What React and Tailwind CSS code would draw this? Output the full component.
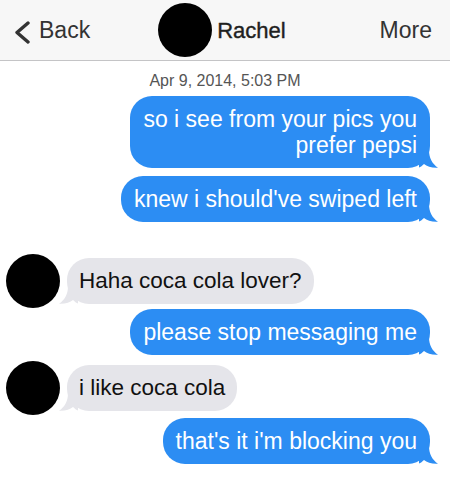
import React from "react";

/* ── DATA ─────────────────────────────────────────────────────────────── */
const BLUE = "#2c8df3";

/* ── TAILS ────────────────────────────────────────────────────────────── */
const TailRight = ({ color }) => (
  <svg
    className="absolute -right-[9px] bottom-0"
    width="20"
    height="18"
    viewBox="0 0 20 18"
  >
    <path
      d="M0 0 H10 C10 8 13 13.5 19 17.8 C13 18.2 8 16.5 5 14 C3.5 15.5 1.5 17 0 17.5 Z"
      fill={color}
    />
  </svg>
);

const TailLeft = ({ color }) => (
  <svg
    className="absolute -left-[9px] bottom-0"
    width="20"
    height="18"
    viewBox="0 0 20 18"
  >
    <path
      d="M20 0 H10 C10 8 7 13.5 1 17.8 C7 18.2 12 16.5 15 14 C16.5 15.5 18.5 17 20 17.5 Z"
      fill={color}
    />
  </svg>
);

/* ── BUBBLES ──────────────────────────────────────────────────────────── */
const Sent = ({ children, className = "" }) => (
  <div
    className={`relative rounded-[22px] bg-[#2c8df3] px-[13px] py-[10px] text-right text-[23px] leading-[26px] text-white ${className}`}
  >
    <span className="relative z-10">{children}</span>
    <TailRight color={BLUE} />
  </div>
);

const Received = ({ children }) => (
  <div className="relative ml-[7px] rounded-[22px] bg-[#e5e5ea] px-[12px] py-[10px] text-[22.5px] leading-[26px] text-[#111]">
    <span className="relative z-10">{children}</span>
    <TailLeft color="#e5e5ea" />
  </div>
);

const Avatar = () => <div className="h-[54px] w-[54px] shrink-0 rounded-full bg-black" />;

/* ══════════════════════════════════════════════════════════════════════
   MAIN PAGE
   ══════════════════════════════════════════════════════════════════════ */
export default function App() {
  return (
    <div
      className="min-h-[500px] w-[450px] overflow-hidden bg-white"
      style={{ fontFamily: '"Liberation Sans", Arial, sans-serif' }}
    >
      {/* ── HEADER ──────────────────────────────────────────────────── */}
      <div className="flex h-[61px] items-center border-b border-[#c4c4c6] bg-[#f7f7f7] pl-[14px] pr-[18px] text-[#333]">
        <svg width="17" height="23" viewBox="0 0 17 23" className="mt-[4px]">
          <polyline
            points="14,2 3,11.5 14,21"
            fill="none"
            stroke="#333"
            strokeWidth="3.4"
            strokeLinecap="round"
            strokeLinejoin="round"
          />
        </svg>
        <span className="ml-[8px] text-[23px] leading-none">Back</span>
        <div className="ml-[68px] h-[54px] w-[54px] rounded-full bg-black" />
        <span className="ml-[5px] mt-[2px] text-[22px] leading-none text-[#1f1f1f] [-webkit-text-stroke:0.4px_#1f1f1f]">
          Rachel
        </span>
        <div className="flex-1" />
        <span className="text-[23px] leading-none">More</span>
      </div>

      {/* ── TIMESTAMP ───────────────────────────────────────────────── */}
      <div className="mt-[10px] text-center text-[16px] leading-[20px] text-[#555]">
        Apr 9, 2014, 5:03 PM
      </div>

      {/* ── THREAD ──────────────────────────────────────────────────── */}
      <div className="flex flex-col items-end pr-[20px]">
        <Sent className="mt-[5px]">
          so i see from your pics you
          <br />
          prefer pepsi
        </Sent>
        <Sent className="mt-[8px]">knew i should've swiped left</Sent>
      </div>

      <div className="mt-[32px] flex items-center pl-[6px]">
        <Avatar />
        <Received>Haha coca cola lover?</Received>
      </div>

      <div className="flex flex-col items-end pr-[20px]">
        <Sent className="mt-[1px]">please stop messaging me</Sent>
      </div>

      <div className="mt-[6px] flex items-center pl-[6px]">
        <Avatar />
        <Received>i like coca cola</Received>
      </div>

      <div className="flex flex-col items-end pr-[20px]">
        <Sent className="mt-[3px]">that's it i'm blocking you</Sent>
      </div>
    </div>
  );
}
